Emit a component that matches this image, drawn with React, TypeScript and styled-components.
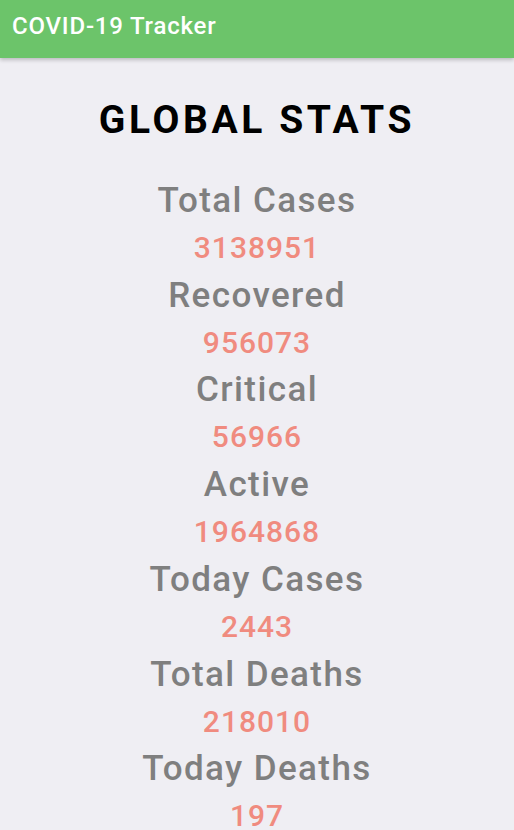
import React from "react";
import styled, { createGlobalStyle } from "styled-components";

const GlobalStyle = createGlobalStyle`
  html, body {
    margin: 0;
    padding: 0;
    background: #efeef3;
    font-family: Roboto, "Noto Sans", sans-serif;
  }
`;

const stats = [
  { label: "Total Cases", value: 3138951 },
  { label: "Recovered", value: 956073 },
  { label: "Critical", value: 56966 },
  { label: "Active", value: 1964868 },
  { label: "Today Cases", value: 2443 },
  { label: "Total Deaths", value: 218010 },
  { label: "Today Deaths", value: 197 },
];

export default function App() {
  return (
    <>
      <GlobalStyle />
      <Page>
        <AppBar>
          <AppTitle>COVID-19 Tracker</AppTitle>
        </AppBar>
        <Content>
          <Heading>GLOBAL STATS</Heading>
          <StatList>
            {stats.map((s) => (
              <Stat key={s.label}>
                <Label>{s.label}</Label>
                <Value>{s.value}</Value>
              </Stat>
            ))}
          </StatList>
        </Content>
      </Page>
    </>
  );
}

const Page = styled.div`
  min-height: 830px;
  background: #efeef3;
`;

const AppBar = styled.header`
  height: 58px;
  background: #6cc46a;
  display: flex;
  align-items: center;
  padding: 0 12px;
  box-shadow: 0 2px 4px rgba(0, 0, 0, 0.22);
  position: relative;
`;

const AppTitle = styled.h1`
  margin: 0 0 6px;
  color: #ffffff;
  font-size: 24px;
  font-weight: 500;
  letter-spacing: 0.8px;
`;

const Content = styled.main`
  display: flex;
  flex-direction: column;
  align-items: center;
  padding-top: 37px;
`;

const Heading = styled.h2`
  margin: 0 0 32px;
  font-size: 39px;
  line-height: 50px;
  font-weight: 700;
  letter-spacing: 3.6px;
  color: #000;
`;

const StatList = styled.div`
  display: flex;
  flex-direction: column;
  align-items: center;
`;

const Stat = styled.div`
  display: flex;
  flex-direction: column;
  align-items: center;
`;

const Label = styled.div`
  font-size: 35px;
  line-height: 47px;
  font-weight: 500;
  letter-spacing: 1.4px;
  color: #7f7f7f;
`;

const Value = styled.div`
  font-size: 30px;
  line-height: 47.7px;
  font-weight: 500;
  letter-spacing: 1px;
  color: #f08b7f;
`;
